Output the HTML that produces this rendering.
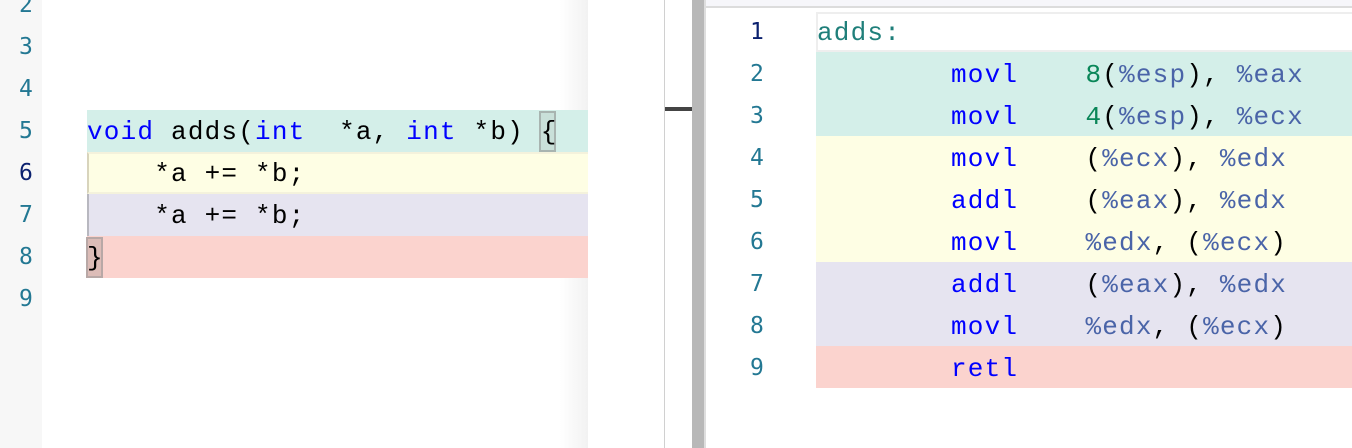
<!DOCTYPE html>
<html><head><meta charset="utf-8"><style>
*{margin:0;padding:0;box-sizing:border-box}
body{width:1352px;height:448px;overflow:hidden;background:#fff;position:relative;font-family:"Liberation Mono",monospace}
.abs{position:absolute}
.ln{position:absolute;font-size:23px;color:#237893;font-family:"Liberation Sans Narrow","DejaVu Sans Mono",sans-serif;line-height:42px}
.code{position:absolute;font-size:26px;letter-spacing:1.2px;line-height:44px;white-space:pre;color:#000}
.kw{color:#0000ff}.reg{color:#4a64a8}.num{color:#098658}.lbl{color:#1f7f7a}
</style></head><body>
<div class="abs" style="left:0;top:0;width:42px;height:448px;background:#f7f7f7"></div>
<div class="abs" style="left:560px;top:0;width:28px;height:448px;background:linear-gradient(to right,rgba(240,240,240,0),#f2f2f2)"></div>
<div class="abs" style="left:87px;top:110px;width:473px;height:42px;background:#d4efe9"></div>
<div class="abs" style="left:560px;top:110px;width:28px;height:42px;background:#d4efe9"></div>
<div class="abs" style="left:87px;top:152px;width:501px;height:42px;background:#fefee4;border-left:2px solid #d8d4bc;border-top:2px solid #f4f2dc;border-bottom:2px solid #f4f2dc"></div>
<div class="abs" style="left:87px;top:194px;width:501px;height:42px;background:#e6e4f0;border-left:2px solid #b8b8c0"></div>
<div class="abs" style="left:87px;top:236px;width:501px;height:42px;background:#fbd3ce"></div>
<div class="abs" style="left:539px;top:111px;width:17px;height:41px;background:#c9e0d9;border:2px solid #a8b4b0"></div>
<div class="abs" style="left:86px;top:237px;width:17px;height:41px;background:#dcbcb7;border:2px solid #b8a8a6"></div>
<div class="ln" style="left:19px;top:-16px">2</div>
<div class="ln" style="left:19px;top:26px">3</div>
<div class="ln" style="left:19px;top:68px">4</div>
<div class="ln" style="left:19px;top:110px">5</div>
<div class="ln" style="left:19px;top:152px;color:#0b216f">6</div>
<div class="ln" style="left:19px;top:194px">7</div>
<div class="ln" style="left:19px;top:236px">8</div>
<div class="ln" style="left:19px;top:278px">9</div>
<div class="code" style="left:87px;top:110px"><span class="kw">void</span> adds(<span class="kw">int</span>  *a, <span class="kw">int</span> *b) {</div>
<div class="code" style="left:87px;top:152px">    *a += *b;</div>
<div class="code" style="left:87px;top:194px">    *a += *b;</div>
<div class="code" style="left:87px;top:236px">}</div>
<div class="abs" style="left:664px;top:0;width:1px;height:448px;background:#d0d0d0"></div>
<div class="abs" style="left:665px;top:107px;width:27px;height:4px;background:#444"></div>
<div class="abs" style="left:692px;top:0;width:12px;height:448px;background:#b8b8b8"></div>
<div class="abs" style="left:704px;top:0;width:2px;height:448px;background:#dedede"></div>
<div class="abs" style="left:706px;top:0;width:646px;height:8px;background:#f6f6fa;border-bottom:2px solid #dcdcdc"></div>
<div class="abs" style="left:816px;top:12px;width:536px;height:40px;border-top:2px solid #eee;border-bottom:2px solid #eee;border-left:2px solid #eee;background:#fff"></div>
<div class="abs" style="left:816px;top:52px;width:536px;height:84px;background:#d4efe9"></div>
<div class="abs" style="left:816px;top:136px;width:536px;height:126px;background:#fefee4"></div>
<div class="abs" style="left:816px;top:262px;width:536px;height:84px;background:#e6e4f0"></div>
<div class="abs" style="left:816px;top:346px;width:536px;height:42px;background:#fbd3ce"></div>
<div class="ln" style="left:750px;top:11px;color:#0b216f">1</div>
<div class="ln" style="left:750px;top:53px">2</div>
<div class="ln" style="left:750px;top:95px">3</div>
<div class="ln" style="left:750px;top:137px">4</div>
<div class="ln" style="left:750px;top:179px">5</div>
<div class="ln" style="left:750px;top:221px">6</div>
<div class="ln" style="left:750px;top:263px">7</div>
<div class="ln" style="left:750px;top:305px">8</div>
<div class="ln" style="left:750px;top:347px">9</div>
<div class="code lbl" style="left:817px;top:11px">adds:</div>
<div class="code" style="left:951px;top:53px"><span class="kw">movl</span>    <span class="num">8</span>(<span class="reg">%esp</span>), <span class="reg">%eax</span></div>
<div class="code" style="left:951px;top:95px"><span class="kw">movl</span>    <span class="num">4</span>(<span class="reg">%esp</span>), <span class="reg">%ecx</span></div>
<div class="code" style="left:951px;top:137px"><span class="kw">movl</span>    (<span class="reg">%ecx</span>), <span class="reg">%edx</span></div>
<div class="code" style="left:951px;top:179px"><span class="kw">addl</span>    (<span class="reg">%eax</span>), <span class="reg">%edx</span></div>
<div class="code" style="left:951px;top:221px"><span class="kw">movl</span>    <span class="reg">%edx</span>, (<span class="reg">%ecx</span>)</div>
<div class="code" style="left:951px;top:263px"><span class="kw">addl</span>    (<span class="reg">%eax</span>), <span class="reg">%edx</span></div>
<div class="code" style="left:951px;top:305px"><span class="kw">movl</span>    <span class="reg">%edx</span>, (<span class="reg">%ecx</span>)</div>
<div class="code" style="left:951px;top:347px"><span class="kw">retl</span></div>
</body></html>
